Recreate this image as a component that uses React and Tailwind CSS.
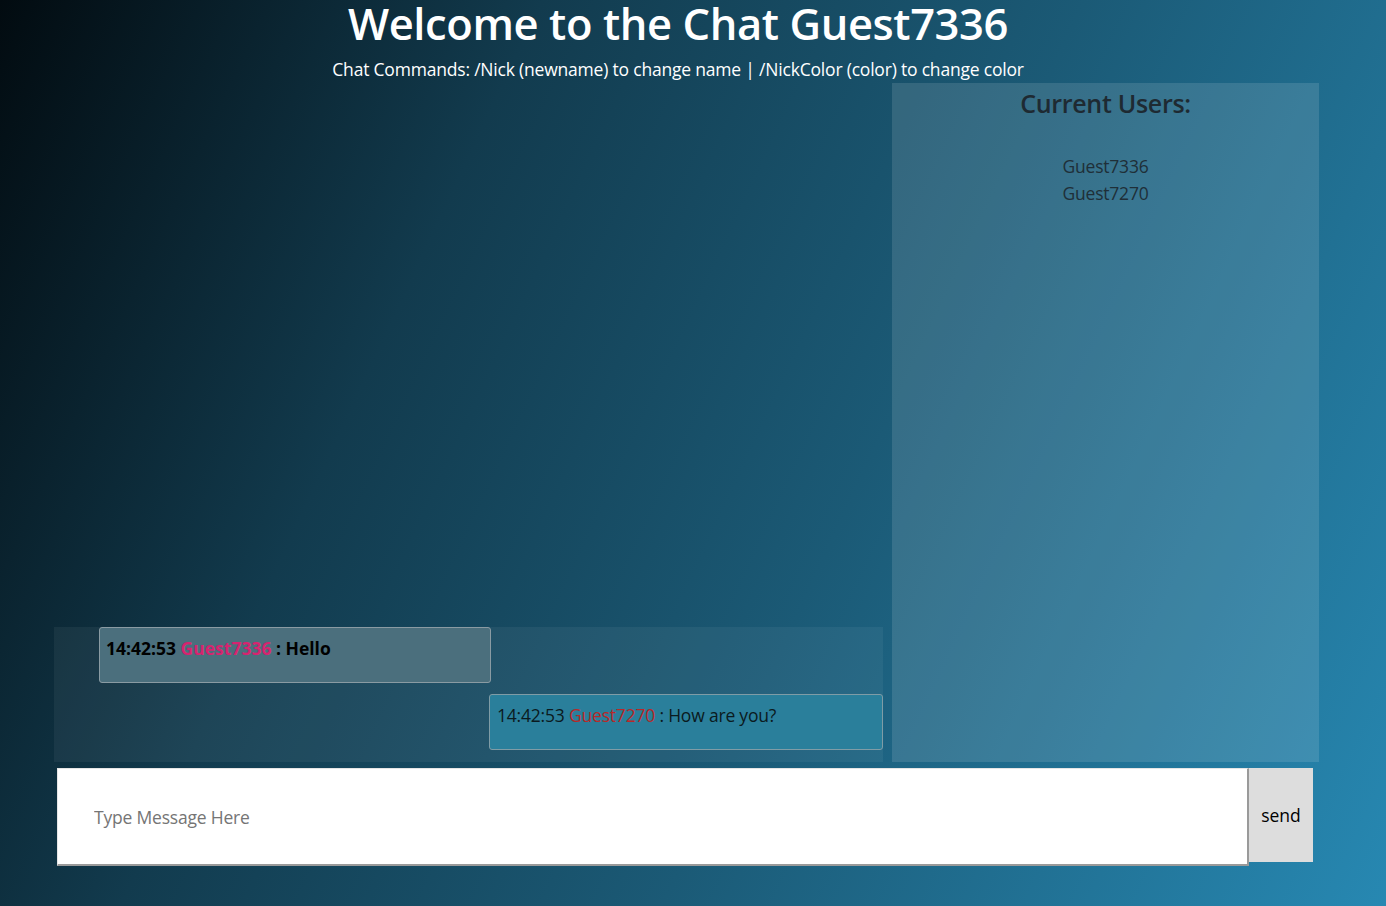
export default function App() {
  return (
    <div className="min-h-[906px] w-full bg-[linear-gradient(115deg,#020b10_0%,#123b4e_30%,#1b5a76_60%,#2788b2_100%)] font-['Open_Sans','Noto_Sans',sans-serif] overflow-hidden">
      <div className="pr-[30px]">
        <h1 className="text-center text-white text-[43.5px] font-semibold leading-[48px] tracking-[-0.4px]">
          Welcome to the Chat Guest7336
        </h1>
        <p className="text-center text-white text-[17.5px] leading-[24px] mt-[9px] tracking-[-0.2px]">
          Chat Commands: /Nick (newname) to change name | /NickColor (color) to change color
        </p>
      </div>

      <div className="flex pl-[54px] mt-[2px]">
        <div className="w-[829px] h-[679px] flex flex-col justify-end">
          <div className="bg-white/5 pb-[12px] flex flex-col gap-[11px]">
            <div className="ml-[45px] w-[392px] h-[56px] bg-[#4b6f7d] border border-[#8a9ba3] rounded-[3px] px-[6px] pt-[8px] text-[17.5px] leading-[24px] font-bold text-black">
              14:42:53 <span className="text-[#d6246f]">Guest7336</span> : Hello
            </div>
            <div className="self-end w-[394px] h-[56px] bg-[#2a7f9b] border border-[#7f9ca6] rounded-[3px] px-[7px] pt-[8px] text-[17.5px] leading-[24px] text-[#0b1a20] tracking-[-0.2px]">
              14:42:53 <span className="text-[#b82828]">Guest7270</span> : How are you?
            </div>
          </div>
        </div>

        <div className="ml-[9px] w-[427px] h-[679px] bg-white/12 flex flex-col items-center">
          <h2 className="text-[25px] font-semibold text-[#1e2a32] leading-[34px] mt-[3px] tracking-[-0.3px]">
            Current Users:
          </h2>
          <ul className="mt-[33px] text-[17.5px] leading-[27px] text-[#1f2f38] text-center tracking-[-0.2px]">
            <li>Guest7336</li>
            <li>Guest7270</li>
          </ul>
        </div>
      </div>

      <div className="flex items-start pl-[57px] mt-[6px]">
        <input
          type="text"
          placeholder="Type Message Here"
          className="w-[1192px] h-[98px] bg-white border-t border-l border-t-[#e5e5e5] border-l-[#e5e5e5] border-b-2 border-r-2 border-b-[#9a9a9a] border-r-[#9a9a9a] px-[36px] text-[17.5px] text-black placeholder:text-[#757575] outline-none tracking-[-0.2px]"
        />
        <button className="w-[64px] h-[94px] bg-[#dddddd] text-[17.5px] text-black">
          send
        </button>
      </div>
    </div>
  );
}
